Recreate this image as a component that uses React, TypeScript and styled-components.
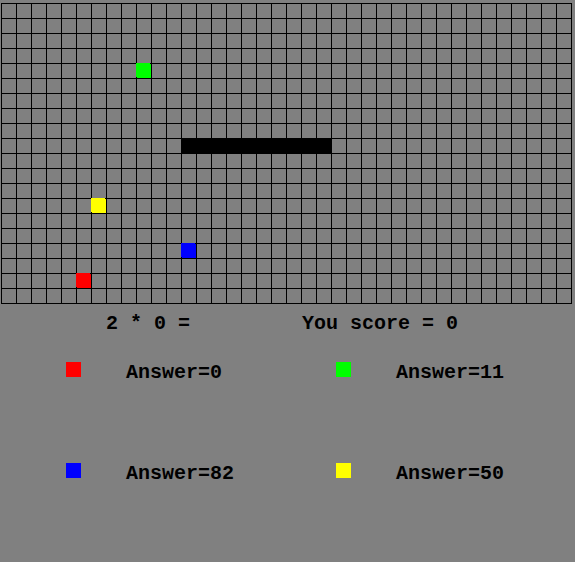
import { FC } from "react";
import styled, { createGlobalStyle } from "styled-components";

const COLS = 38;
const ROWS = 20;

const filled: Record<string, string> = {
	"9,4": "#00ff00",
	"6,13": "#ffff00",
	"12,16": "#0000ff",
	"5,18": "#ff0000",
};
for (let c = 12; c < 22; c++) filled[`${c},9`] = "#000000";

const answers = [
	{ color: "#ff0000", text: "Answer=0" },
	{ color: "#00ff00", text: "Answer=11" },
	{ color: "#0000ff", text: "Answer=82" },
	{ color: "#ffff00", text: "Answer=50" },
];

export default function App() {
	const cells = [];
	for (let r = 0; r < ROWS; r++) {
		for (let c = 0; c < COLS; c++) {
			cells.push(<Cell key={`${c}-${r}`} $fill={filled[`${c},${r}`]} />);
		}
	}

	return (
		<Page>
			<GlobalStyle />
			<Board>{cells}</Board>
			<Question>
				<Expr>2 * 0 =</Expr>
				<span>You score = 0</span>
			</Question>
			<Answers>
				{answers.map((a) => (
					<AnswerItem key={a.text} color={a.color} text={a.text} />
				))}
			</Answers>
		</Page>
	);
}

const AnswerItem: FC<{ color: string; text: string }> = ({ color, text }) => (
	<Answer>
		<Swatch $color={color} />
		<Label>{text}</Label>
	</Answer>
);

const GlobalStyle = createGlobalStyle`
	html, body {
		margin: 0;
		padding: 0;
		background: #808080;
	}
`;

const Page = styled.div`
	width: 575px;
	height: 562px;
	background: #808080;
	font-family: "Liberation Mono", "Courier New", monospace;
	font-weight: bold;
	font-size: 20px;
	line-height: 20px;
	color: #000;
	overflow: hidden;
`;

const Board = styled.div`
	display: grid;
	grid-template-columns: repeat(${COLS}, 14px);
	grid-auto-rows: 14px;
	gap: 1px;
	padding: 1px;
	background: #000;
	width: max-content;
	margin: 3px 0 0 1px;
`;

const Cell = styled.div<{ $fill?: string }>`
	background: ${(p) => p.$fill || "#808080"};
	box-shadow: ${(p) => (p.$fill ? `-1px -1px 0 0 ${p.$fill}` : "none")};
`;

const Question = styled.div`
	display: flex;
	margin-top: 10px;
	padding-left: 106px;
`;

const Expr = styled.span`
	width: 196px;
`;

const Answers = styled.div`
	display: grid;
	grid-template-columns: 270px 270px;
	row-gap: 80px;
	margin-top: 28px;
	padding-left: 66px;
`;

const Answer = styled.div`
	display: flex;
	align-items: flex-start;
	gap: 45px;
`;

const Label = styled.span`
	margin-top: 1px;
`;

const Swatch = styled.div<{ $color: string }>`
	width: 15px;
	height: 15px;
	background: ${(p) => p.$color};
`;
